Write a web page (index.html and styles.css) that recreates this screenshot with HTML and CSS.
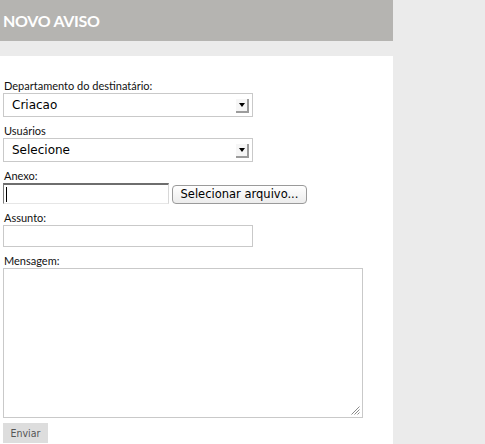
FILE: index.html
```html
<!DOCTYPE html>
<html lang="pt">
<head>
<meta charset="utf-8">
<title>Novo aviso</title>
<link rel="stylesheet" href="styles.css">
</head>
<body>
<div class="page">
  <header class="header"><h1 class="title">NOVO AVISO</h1></header>
  <form class="panel">
    <div class="field">
      <label class="label">Departamento do destinatário:</label>
      <div class="select"><span class="select-text">Criacao</span><span class="arrow"><span class="tri"></span></span></div>
    </div>
    <div class="field">
      <label class="label">Usuários</label>
      <div class="select"><span class="select-text">Selecione</span><span class="arrow"><span class="tri"></span></span></div>
    </div>
    <div class="field">
      <label class="label">Anexo:</label>
      <div class="file-row">
        <div class="file-text"><span class="caret"></span></div>
        <button type="button" class="file-btn">Selecionar arquivo...</button>
      </div>
    </div>
    <div class="field">
      <label class="label">Assunto:</label>
      <div class="text-input"></div>
    </div>
    <div class="field">
      <label class="label">Mensagem:</label>
      <div class="textarea">
        <svg class="grip" width="10" height="10" viewBox="0 0 10 10"><path d="M9.5 1.5 L1.5 9.5 M9.5 4.5 L4.5 9.5 M9.5 7.5 L7.5 9.5" stroke="#8a8a8a" stroke-width="1" fill="none"/></svg>
      </div>
    </div>
    <button type="button" class="submit">Enviar</button>
  </form>
</div>
</body>
</html>
```

FILE: styles.css
```css
html, body {
  margin: 0;
  padding: 0;
}
body {
  background: #ebebeb;
  font-family: Lato, "Open Sans", sans-serif;
  height: 444px;
  overflow: hidden;
}
.page {
  width: 393px;
}
.header {
  height: 41px;
  background: #b5b4b1;
  display: flex;
  align-items: center;
  padding-left: 3px;
  box-sizing: border-box;
}
.title {
  margin: 0;
  color: #fff;
  font-family: Lato, sans-serif;
  font-weight: 700;
  font-size: 16px;
  letter-spacing: -0.3px;
  line-height: 1;
  padding-top: 1px;
}
.panel {
  margin: 15px 0 0 0;
  background: #fff;
  padding: 23px 0 0 3px;
  min-height: 388px;
  box-sizing: border-box;
}
.field {
  display: flex;
  flex-direction: column;
  align-items: flex-start;
}
.field + .field {
  margin-top: 7px;
}
.label {
  display: block;
  font-family: Lato, sans-serif;
  font-size: 11px;
  line-height: 14px;
  color: #111;
  padding-left: 1px;
}
.select {
  width: 250px;
  height: 24px;
  box-sizing: border-box;
  border: 1px solid #c9c9c9;
  display: flex;
  align-items: center;
  justify-content: space-between;
  padding: 0 3px 0 8px;
  font-family: "DejaVu Sans", sans-serif;
  font-size: 12px;
  color: #000;
}
.arrow {
  width: 13px;
  height: 14px;
  box-sizing: border-box;
  background: #f6f6f6;
  border-right: 2px solid #9c9c9c;
  border-bottom: 2px solid #9c9c9c;
  display: flex;
  align-items: center;
  justify-content: center;
  margin-top: 1px;
}
.tri {
  width: 0;
  height: 0;
  border-left: 3px solid transparent;
  border-right: 3px solid transparent;
  border-top: 4px solid #000;
  margin-top: 1px;
}
.file-row {
  display: flex;
  align-items: center;
  gap: 3px;
}
.file-text {
  width: 166px;
  height: 21px;
  box-sizing: border-box;
  border-top: 2px solid #6e6e6e;
  border-left: 1px solid #7a7a7a;
  border-right: 1px solid #d8d8d8;
  border-bottom: 1px solid #e6e6e6;
  display: flex;
  align-items: center;
  padding-left: 2px;
}
.caret {
  width: 1px;
  height: 15px;
  background: #000;
}
.file-btn {
  width: 135px;
  height: 19px;
  box-sizing: border-box;
  border: 1px solid #9a9a9a;
  border-radius: 4px;
  background: linear-gradient(#ffffff, #ececec);
  font-family: "DejaVu Sans", sans-serif;
  font-size: 11.5px;
  color: #000;
  padding: 0;
  line-height: 17px;
  margin-top: 1px;
}
.text-input {
  width: 250px;
  height: 22px;
  box-sizing: border-box;
  border: 1px solid #c9c9c9;
}
.textarea {
  position: relative;
  width: 360px;
  height: 150px;
  box-sizing: border-box;
  border: 1px solid #c9c9c9;
}
.grip {
  position: absolute;
  right: 2px;
  bottom: 2px;
}
.submit {
  display: block;
  margin-top: 5px;
  width: 45px;
  height: 20px;
  border: none;
  background: #dddddd;
  color: #555;
  font-family: "DejaVu Sans Condensed", "DejaVu Sans", sans-serif;
  font-stretch: condensed;
  font-size: 10.5px;
  padding: 0;
}
```
